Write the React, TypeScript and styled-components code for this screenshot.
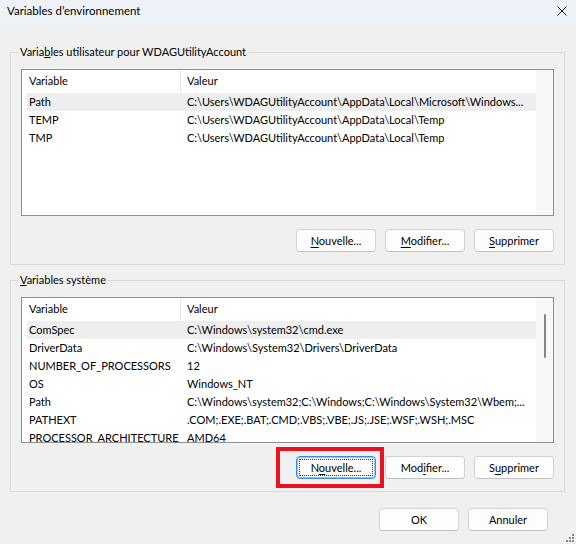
import styled, {createGlobalStyle} from "styled-components"

const GlobalStyle = createGlobalStyle`
  html, body {
    margin: 0;
    padding: 0;
    background: #f0f0f0;
  }
  body {
    font-family: "Segoe UI", Lato, "Noto Sans", sans-serif;
    font-size: 11px;
    color: #000;
  }
`

const Window = styled.div`
  position: relative;
  width: 576px;
  height: 544px;
  display: flex;
  flex-direction: column;
  background: #f0f0f0;
  overflow: hidden;
`

const TitleBar = styled.div`
  flex: none;
  height: 25px;
  box-sizing: border-box;
  padding: 0 9px 3px 7px;
  display: flex;
  align-items: center;
  justify-content: space-between;
  background: #eef3f9;
`

const Title = styled.span`
  font-size: 11.5px;
  line-height: 16px;
`

const Body = styled.div`
  display: flex;
  flex-direction: column;
  gap: 7px;
  padding: 19px 11px 0 10px;
`

const Group = styled.fieldset`
  margin: 0;
  min-width: 0;
  padding: 9px 10px 12px 10px;
  border: 1px solid #d9d9d9;
  display: flex;
  flex-direction: column;
`

const Legend = styled.legend`
  padding: 0 1px;
  margin-left: -2px;
  line-height: 16px;
`

const List = styled.div<{$height: number}>`
  height: ${p => p.$height}px;
  box-sizing: border-box;
  border: 1px solid #8f8f8f;
  background: #fff;
  display: flex;
`

const ListMain = styled.div`
  flex: 1;
  min-width: 0;
  padding-left: 5px;
  overflow: hidden;
`

const ScrollStrip = styled.div`
  flex: none;
  width: 17px;
  background: #f7f7f7;
  padding-top: 16px;
  box-sizing: border-box;
`

const ScrollThumb = styled.div`
  width: 2px;
  height: 44px;
  margin-left: 8px;
  border-radius: 1px;
  background: #858585;
`

const HeaderRow = styled.div`
  display: grid;
  grid-template-columns: 154px 1fr;
  height: 23px;
  align-items: stretch;
`

const HeaderCell = styled.div<{$divider?: boolean}>`
  box-sizing: border-box;
  display: flex;
  align-items: center;
  padding: 0 0 2px ${p => (p.$divider ? 2 : 6)}px;
  border-right: ${p => (p.$divider ? "1px solid #e5e5e5" : "none")};
`

const Row = styled.div<{$selected?: boolean}>`
  display: grid;
  grid-template-columns: 154px 1fr;
  height: 18px;
  align-items: center;
  background: ${p => (p.$selected ? "#eeeeee" : "transparent")};
  white-space: nowrap;
`

const Cell = styled.div<{$first?: boolean}>`
  padding-left: ${p => (p.$first ? 2 : 6)}px;
  overflow: hidden;
  line-height: 16px;
`

const ButtonRow = styled.div`
  display: flex;
  justify-content: flex-end;
  gap: 9px;
  margin-top: 13px;
`

const Button = styled.button<{$focused?: boolean}>`
  position: relative;
  width: 80px;
  height: 23px;
  padding: 0;
  box-sizing: border-box;
  font-family: inherit;
  font-size: 11px;
  color: #000;
  background: #fdfdfd;
  border: 1px solid ${p => (p.$focused ? "#3c8ddf" : "#d3d3d3")};
  border-bottom-color: ${p => (p.$focused ? "#3c8ddf" : "#c2c2c2")};
  border-radius: 4px;
  box-shadow: ${p => (p.$focused ? "inset 0 0 0 1px #8fc0f0" : "none")};
  outline: ${p => (p.$focused ? "1px dotted #333" : "none")};
  outline-offset: -4px;
  u {
    text-underline-offset: 2px;
  }
`

const Highlight = styled.span`
  position: absolute;
  left: -21px;
  right: -9px;
  top: -10px;
  bottom: -10px;
  border: 4px solid #e8111d;
  pointer-events: none;
`

const Footer = styled.div`
  display: flex;
  justify-content: flex-end;
  gap: 9px;
  padding: 16px 28px 0 0;
`

const Grip = styled.svg`
  position: absolute;
  right: 2px;
  bottom: 2px;
`

type Variable = {name: string; value: string}

const userVars: Variable[] = [
  {name: "Path", value: "C:\\Users\\WDAGUtilityAccount\\AppData\\Local\\Microsoft\\Windows..."},
  {name: "TEMP", value: "C:\\Users\\WDAGUtilityAccount\\AppData\\Local\\Temp"},
  {name: "TMP", value: "C:\\Users\\WDAGUtilityAccount\\AppData\\Local\\Temp"}
]

const systemVars: Variable[] = [
  {name: "ComSpec", value: "C:\\Windows\\system32\\cmd.exe"},
  {name: "DriverData", value: "C:\\Windows\\System32\\Drivers\\DriverData"},
  {name: "NUMBER_OF_PROCESSORS", value: "12"},
  {name: "OS", value: "Windows_NT"},
  {name: "Path", value: "C:\\Windows\\system32;C:\\Windows;C:\\Windows\\System32\\Wbem;..."},
  {name: "PATHEXT", value: ".COM;.EXE;.BAT;.CMD;.VBS;.VBE;.JS;.JSE;.WSF;.WSH;.MSC"},
  {name: "PROCESSOR_ARCHITECTURE", value: "AMD64"}
]

const VarList = (props: {vars: Variable[]; height: number; scroll?: boolean}) => (
  <List $height={props.height}>
    <ListMain>
      <HeaderRow>
        <HeaderCell $divider>Variable</HeaderCell>
        <HeaderCell>Valeur</HeaderCell>
      </HeaderRow>
      {props.vars.map((v, i) => (
        <Row key={`${v.name}-${i}`} $selected={i === 0}>
          <Cell $first>{v.name}</Cell>
          <Cell>{v.value}</Cell>
        </Row>
      ))}
    </ListMain>
    <ScrollStrip>{props.scroll && <ScrollThumb />}</ScrollStrip>
  </List>
)

export default function App() {
  return (
    <Window>
      <GlobalStyle />
      <TitleBar>
        <Title>Variables d’environnement</Title>
        <svg width="10" height="10" viewBox="0 0 10 10">
          <path d="M0.5 0.5 9.5 9.5M9.5 0.5 0.5 9.5" stroke="#1b1b1b" strokeWidth="1" />
        </svg>
      </TitleBar>
      <Body>
        <Group>
          <Legend>
            Varia<u>b</u>les utilisateur pour WDAGUtilityAccount
          </Legend>
          <VarList vars={userVars} height={147} />
          <ButtonRow>
            <Button>
              <u>N</u>ouvelle...
            </Button>
            <Button>
              <u>M</u>odifier...
            </Button>
            <Button>
              <u>S</u>upprimer
            </Button>
          </ButtonRow>
        </Group>
        <Group>
          <Legend>
            <u>V</u>ariables système
          </Legend>
          <VarList vars={systemVars} height={146} scroll />
          <ButtonRow>
            <Button $focused>
              N<u>o</u>uvelle...
              <Highlight />
            </Button>
            <Button>
              Mod<u>i</u>fier...
            </Button>
            <Button>
              S<u>u</u>pprimer
            </Button>
          </ButtonRow>
        </Group>
      </Body>
      <Footer>
        <Button>OK</Button>
        <Button>Annuler</Button>
      </Footer>
      <Grip width="8" height="8" viewBox="0 0 8 8">
        {[
          [6, 0],
          [6, 3],
          [3, 3],
          [6, 6],
          [3, 6],
          [0, 6]
        ].map(([x, y]) => (
          <rect key={`${x}-${y}`} x={x} y={y} width="2" height="2" fill="#8a8a8a" />
        ))}
      </Grip>
    </Window>
  )
}
